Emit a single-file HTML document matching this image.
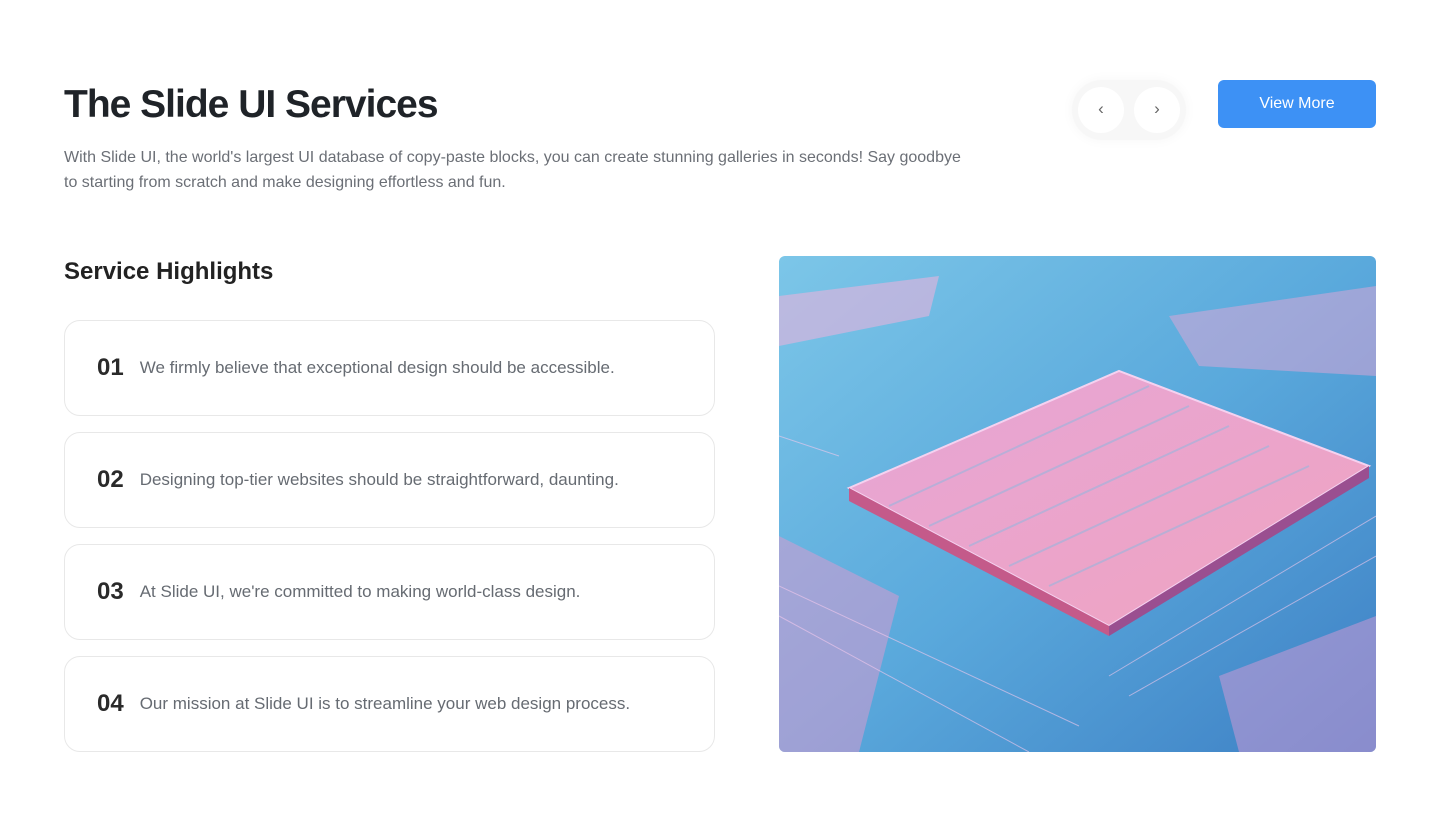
<!DOCTYPE html>
<html><head><meta charset="utf-8"><style>
*{margin:0;padding:0;box-sizing:border-box}
body{width:1440px;height:832px;background:#fff;font-family:"Liberation Sans",sans-serif;position:relative;overflow:hidden;color:#222}
h1{position:absolute;left:64px;top:83px;font-size:39px;font-weight:700;letter-spacing:-1px;color:#1f2328}
.sub{position:absolute;left:64px;top:145px;width:905px;font-size:16px;line-height:25px;color:#6b6f76}
.nav{position:absolute;left:1072px;top:80px;width:114px;height:60px;border-radius:30px;background:#f7f7f7;box-shadow:0 0 12px rgba(0,0,0,0.04)}
.nav div{position:absolute;top:7px;width:46px;height:46px;border-radius:50%;background:#fff;text-align:center;line-height:44px;font-size:17px;color:#666}
.btn{position:absolute;left:1218px;top:80px;width:158px;height:48px;border-radius:6px;background:#3d91f5;color:#fff;font-size:16px;text-align:center;line-height:48px}
h2{position:absolute;left:64px;top:258px;font-size:24px;font-weight:700;color:#222}
.card{position:absolute;left:64px;width:651px;height:96px;border:1px solid #e8e8e8;border-radius:16px;display:flex;align-items:center;padding-left:32px}
.card b{font-size:24px;color:#2a2a2a;margin-right:16px}
.card span{font-size:17px;color:#666b72}
.img{position:absolute;left:779px;top:256px;width:597px;height:496px;border-radius:6px;overflow:hidden}
</style></head><body>
<h1>The Slide UI Services</h1>
<div class="sub">With Slide UI, the world's largest UI database of copy-paste blocks, you can create stunning galleries in seconds! Say goodbye to starting from scratch and make designing effortless and fun.</div>
<div class="nav"><div style="left:6px">&#8249;</div><div style="left:62px">&#8250;</div></div>
<div class="btn">View More</div>
<h2>Service Highlights</h2>
<div class="card" style="top:320px"><b>01</b><span>We firmly believe that exceptional design should be accessible.</span></div>
<div class="card" style="top:432px"><b>02</b><span>Designing top-tier websites should be straightforward, daunting.</span></div>
<div class="card" style="top:544px"><b>03</b><span>At Slide UI, we're committed to making world-class design.</span></div>
<div class="card" style="top:656px"><b>04</b><span>Our mission at Slide UI is to streamline your web design process.</span></div>
<div class="img"><svg width="597" height="496" viewBox="0 0 597 496">
<defs><linearGradient id="g" x1="0" y1="0" x2="1" y2="1"><stop offset="0" stop-color="#7cc6e8"/><stop offset="0.5" stop-color="#5aa9dc"/><stop offset="1" stop-color="#3d7fc4"/></linearGradient>
<linearGradient id="c" x1="0" y1="0" x2="1" y2="1"><stop offset="0" stop-color="#e6a6d6"/><stop offset="1" stop-color="#f0a3c0"/></linearGradient></defs>
<rect width="597" height="496" fill="url(#g)"/>
<polygon points="0,40 160,20 150,60 0,90" fill="#e8b3dc" opacity="0.6"/>
<polygon points="390,60 597,30 597,120 420,110" fill="#e4a6d6" opacity="0.5"/>
<polygon points="0,280 120,340 80,496 0,496" fill="#d79ad0" opacity="0.55"/>
<polygon points="440,420 597,360 597,496 460,496" fill="#d69ad6" opacity="0.5"/>
<polygon points="70,232 340,115 590,210 330,370" fill="url(#c)" stroke="#f5d2f0" stroke-width="2"/>
<g stroke="#8ab8e0" stroke-width="2" opacity="0.5"><path d="M110 250 L370 130 M150 270 L410 150 M190 290 L450 170 M230 310 L490 190 M270 330 L530 210"/></g>
<polygon points="70,232 330,370 330,380 70,245" fill="#c45a8a"/>
<polygon points="330,370 590,210 590,222 330,380" fill="#9a4f90"/>
<g stroke="#f3c9ec" stroke-width="1" opacity="0.6" fill="none">
<path d="M0 330 L300 470 M0 360 L250 496 M330 420 L597 260 M350 440 L597 300 M0 180 L60 200"/></g>
</svg></div>
</body></html>
